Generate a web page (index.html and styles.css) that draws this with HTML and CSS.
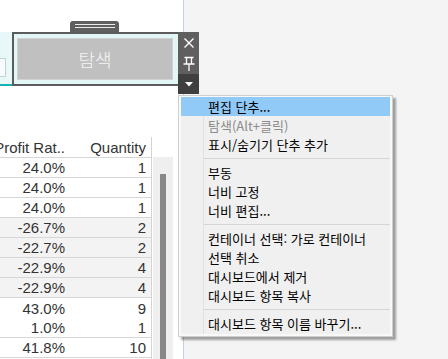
FILE: index.html
```html
<!DOCTYPE html>
<html lang="ko">
<head>
  <meta charset="UTF-8" />
  <title>Dashboard</title>
  <link rel="stylesheet" href="styles.css">
</head>
<body>

  <!-- Dashboard canvas -->
  <div class="canvas">
    <div class="pane-left">
      <!-- Horizontal container (selected zone) -->
      <div class="zone">
        <div class="field"></div>
      </div>

      <!-- Worksheet -->
      <div class="sheet">
        <div class="table">
          <div class="row head">
            <div class="cell"><span>Profit Rat..</span></div>
            <div class="cell"><span>Quantity</span></div>
          </div>
          <div class="row"><div class="cell">24.0%</div><div class="cell">1</div></div>
          <div class="row"><div class="cell">24.0%</div><div class="cell">1</div></div>
          <div class="row"><div class="cell">24.0%</div><div class="cell">1</div></div>
          <div class="row alt"><div class="cell">-26.7%</div><div class="cell">2</div></div>
          <div class="row alt"><div class="cell">-22.7%</div><div class="cell">2</div></div>
          <div class="row alt"><div class="cell">-22.9%</div><div class="cell">4</div></div>
          <div class="row alt"><div class="cell">-22.9%</div><div class="cell">4</div></div>
          <div class="row no-line"><div class="cell">43.0%</div><div class="cell">9</div></div>
          <div class="row"><div class="cell">1.0%</div><div class="cell">1</div></div>
          <div class="row"><div class="cell">41.8%</div><div class="cell">10</div></div>
        </div>
        <div class="scrollbar"><div class="thumb"></div></div>
      </div>
    </div>
    <div class="divider"></div>
    <div class="pane-right"></div>
  </div>

  <!-- Floating object being edited -->
  <div class="grip"><span></span><span></span></div>
  <div class="float-box">
    <div class="float-btn">탐색</div>
  </div>
  <div class="toolbar">
    <div class="tool">
      <svg width="12" height="12" viewBox="0 0 12 12"><path d="M1.5 1.5 L10.5 10.5 M10.5 1.5 L1.5 10.5" stroke="#fff" stroke-width="1.4" fill="none"/></svg>
    </div>
    <div class="tool">
      <svg width="12" height="16" viewBox="0 0 12 16"><path d="M1.5 1.5 H10.5 M3.5 1.5 V7.5 M8.5 1.5 V7.5 M0.5 8 H11.5 M6 8 V15" stroke="#fff" stroke-width="1.3" fill="none"/></svg>
    </div>
    <div class="tool dark">
      <svg width="8" height="5" viewBox="0 0 8 5"><path d="M0 0 H8 L4 4.5 Z" fill="#fff"/></svg>
    </div>
  </div>

  <!-- Context menu -->
  <div class="menu">
    <ul class="menu-list">
      <li class="active">편집 단추...</li>
      <li class="disabled">탐색(Alt+클릭)</li>
      <li>표시/숨기기 단추 추가</li>
      <li class="sep"></li>
      <li>부동</li>
      <li>너비 고정</li>
      <li>너비 편집...</li>
      <li class="sep"></li>
      <li>컨테이너 선택: 가로 컨테이너</li>
      <li>선택 취소</li>
      <li>대시보드에서 제거</li>
      <li>대시보드 항목 복사</li>
      <li class="sep"></li>
      <li>대시보드 항목 이름 바꾸기...</li>
    </ul>
  </div>

</body>
</html>
```

FILE: styles.css
```css
* {
  margin: 0;
  padding: 0;
  box-sizing: border-box;
}

body {
  position: relative;
  width: 448px;
  height: 359px;
  overflow: hidden;
  font-family: 'Liberation Sans', Arial, sans-serif;
  background: #f4f4f4;
}

/* Canvas */
.canvas {
  display: flex;
  height: 359px;
}

.pane-left {
  width: 183px;
  background: #fff;
  overflow: hidden;
}

.divider {
  width: 1px;
  background: #c3d1df;
}

.pane-right {
  flex: 1;
  background: #f4f4f4;
}

/* Selected container */
.zone {
  margin-top: 32px;
  height: 54px;
  background: #e8f7f7;
  border-bottom: 2px solid #17b2b2;
  padding-top: 26px;
}

.field {
  width: 16px;
  height: 19px;
  margin-left: -10px;
  background: #f6fbfb;
  border: 1px solid #c6d2d2;
}

/* Worksheet table */
.sheet {
  display: flex;
  margin-top: 51px;
}

.table {
  width: 152px;
  border-right: 1px solid #d4d4d4;
  color: #333;
  font-size: 15px;
}

.row {
  display: grid;
  grid-template-columns: 70px 81px;
  height: 20px;
  border-bottom: 1px solid #d6d6d6;
}

.row.head {
  height: 21px;
}

.row.alt {
  background: #f3f3f3;
}

.row.no-line {
  border-bottom: none;
}

.cell {
  display: flex;
  justify-content: flex-end;
  align-items: center;
  padding-right: 5px;
  white-space: nowrap;
}

.scrollbar {
  width: 20px;
  margin-top: 20px;
  margin-left: 1px;
  background: #efefef;
  padding: 17px 7px 0;
}

.thumb {
  width: 6px;
  height: 200px;
  background: #888;
}

/* Floating object */
.grip {
  position: absolute;
  left: 70px;
  top: 21px;
  width: 49px;
  height: 11px;
  background: #5f5f5f;
  border-radius: 3px 3px 0 0;
  padding: 3px 4px 0 5px;
}

.grip span {
  display: block;
  height: 1px;
  margin-bottom: 2px;
  background: #ececec;
}

.float-box {
  position: absolute;
  left: 12px;
  top: 32px;
  width: 168px;
  height: 54px;
  background: #e3f6f6;
  border: 2px solid #5c5c5c;
  padding: 4px 5px 4px 3px;
}

.float-btn {
  height: 42px;
  background: #c0c0c0;
  border: 1px solid #d2d2d2;
  color: #f6f6f6;
  font-family: 'Noto Sans CJK KR', sans-serif;
  font-size: 18px;
  font-weight: 300;
  display: flex;
  justify-content: center;
  align-items: center;
}

.toolbar {
  position: absolute;
  left: 178px;
  top: 32px;
  width: 21px;
  background: #5f5f5f;
}

.tool {
  height: 21px;
  display: flex;
  justify-content: center;
  align-items: center;
}

.tool.dark {
  height: 20px;
  background: #3f3f3f;
}

/* Context menu */
.menu {
  position: absolute;
  left: 178px;
  top: 95px;
  width: 215px;
  height: 242px;
  background: #f9f9f9;
  border: 1px solid #cfcfcf;
  padding: 1px 2px 2px;
  box-shadow: 3px 3px 2px rgba(0, 0, 0, 0.35);
  font-family: 'Noto Sans CJK KR', sans-serif;
  font-size: 13px;
  color: #000;
}

.menu-list {
  list-style: none;
  height: 100%;
  background: #f0f0f0 linear-gradient(#e2e2e2, #e2e2e2) 22px 0 / 1px 100% no-repeat;
}

.menu-list li {
  height: 19px;
  line-height: 19px;
  padding-left: 27px;
  white-space: nowrap;
}

.menu-list li.active {
  background: #91c9f7;
}

.menu-list li.disabled {
  color: #8c8c8c;
}

.menu-list li.sep {
  height: 9px;
  padding: 4px 0 0 23px;
}

.menu-list li.sep::before {
  content: '';
  display: block;
  height: 1px;
  background: #d5d5d5;
}
```
